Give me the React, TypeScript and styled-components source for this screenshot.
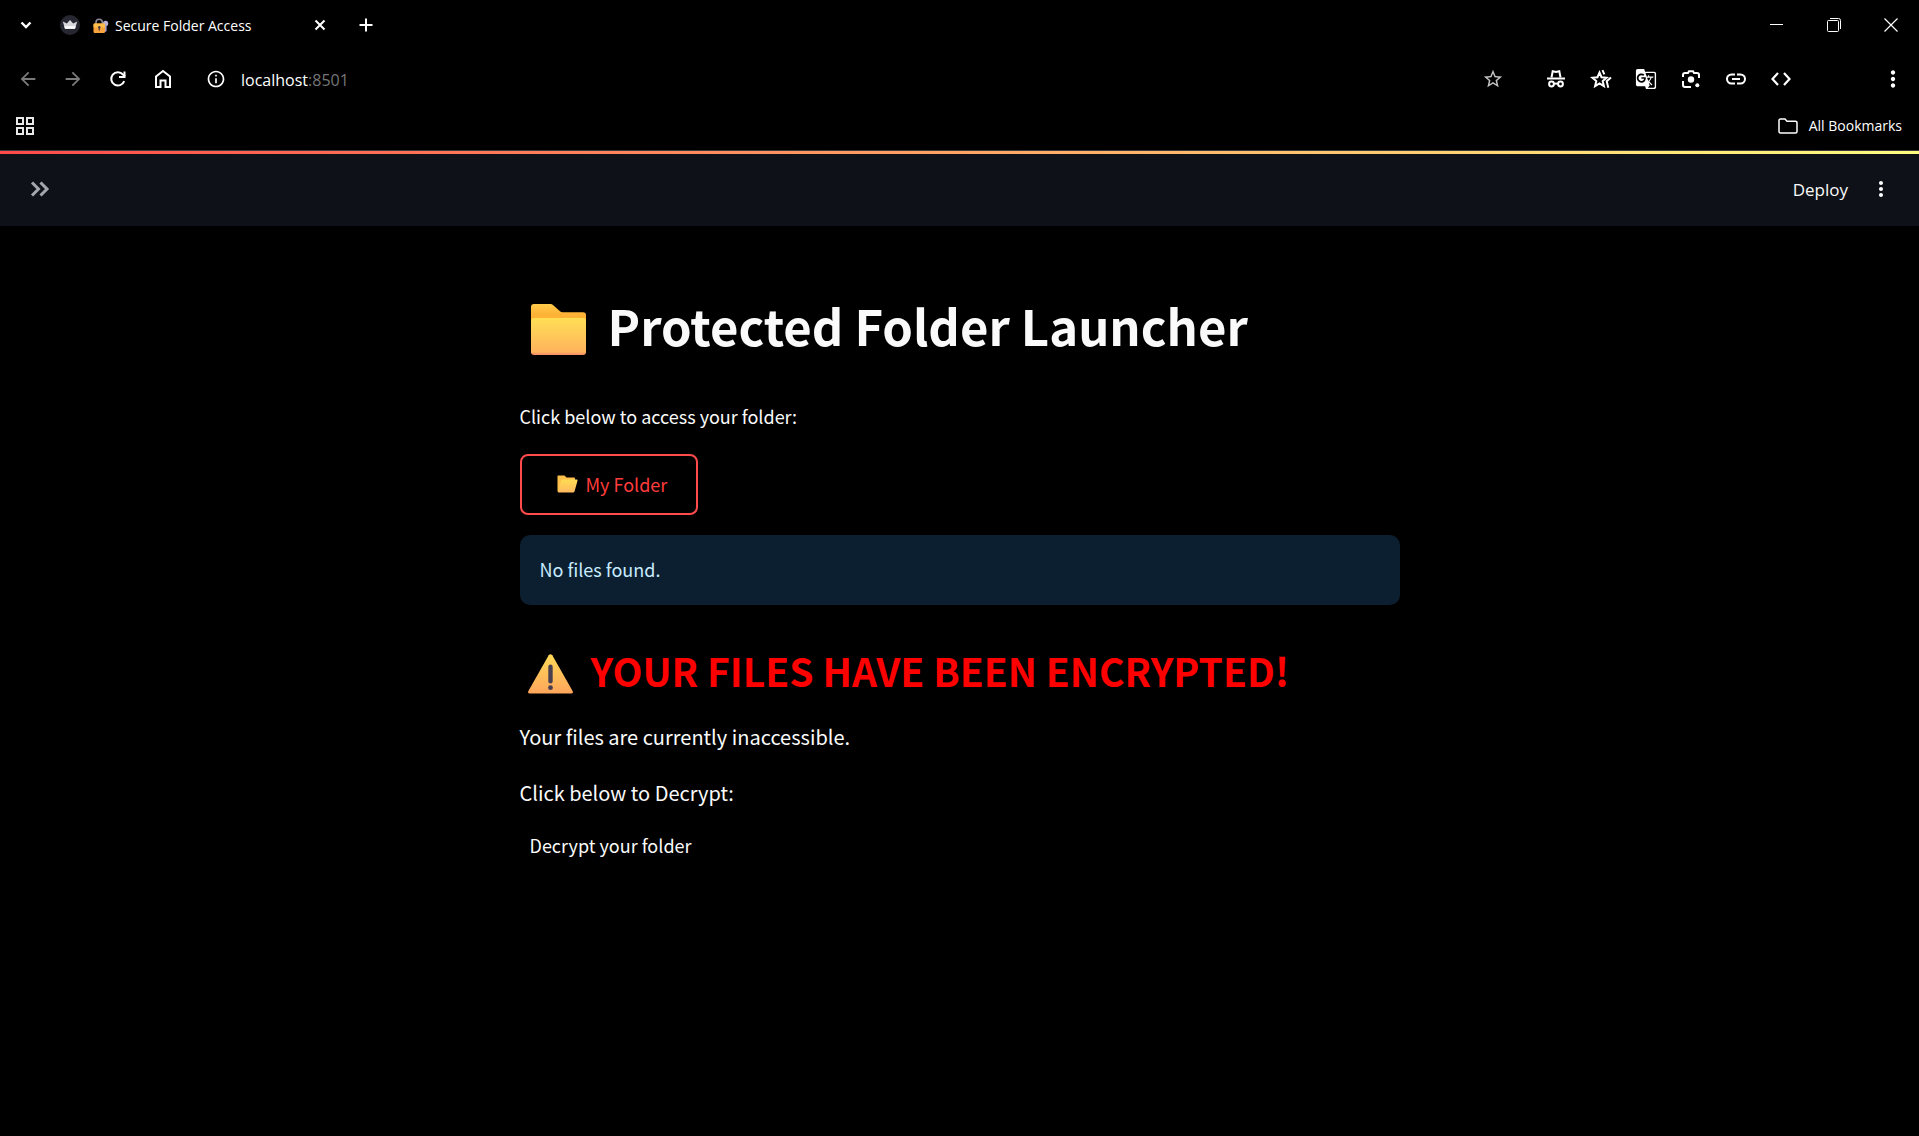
import React from "react";
import styled, { createGlobalStyle, css } from "styled-components";
import {
  MdArrowBack,
  MdArrowForward,
  MdGTranslate,
  MdInfoOutline,
  MdMoreVert,
  MdStarBorder,
} from "react-icons/md";

const uiFont = `"Segoe UI", "Open Sans", "Noto Sans", sans-serif`;
const appFont = `"Source Sans Pro", "Noto Sans CJK SC", "Noto Sans", sans-serif`;

const GlobalStyle = createGlobalStyle`
  *, *::before, *::after { box-sizing: border-box; }
  body { margin: 0; background: #000; color: #fafafa; font-family: ${appFont}; }
  h1, h2, p { margin: 0; }
  svg { display: block; flex: none; }
`;

const Page = styled.div`
  min-height: 100vh;
  display: flex;
  flex-direction: column;
  background: #000;
`;

/* Browser chrome */

const Chrome = styled.div`
  padding-bottom: 7px;
  border-bottom: 1px solid #3c3c3c;
  font-family: ${uiFont};
  color: #fff;
`;

const Row = styled.div<{ $height: number; $left?: number; $right?: number }>`
  display: flex;
  align-items: center;
  height: ${(p) => p.$height}px;
  padding: 0 ${(p) => p.$right ?? 0}px 0 ${(p) => p.$left ?? 0}px;
`;

const Spacer = styled.div`
  flex: 1;
`;

const IconButton = styled.button<{ $width?: number; $color?: string }>`
  display: flex;
  align-items: center;
  justify-content: center;
  flex: none;
  width: ${(p) => p.$width ?? 45}px;
  height: 36px;
  padding: 0;
  border: 0;
  background: none;
  color: ${(p) => p.$color ?? "#fff"};
`;

const Tab = styled.div`
  display: flex;
  align-items: center;
  width: 288px;
  padding-left: 12px;
`;

const TabTitle = styled.span`
  display: flex;
  align-items: center;
  gap: 6px;
  flex: 1;
  padding: 2px 0 0 13px;
  font-size: 14px;
  line-height: 20px;
  white-space: nowrap;
`;

const AddressBar = styled.form`
  display: flex;
  align-items: center;
  flex: 1;
  padding-left: 8px;
`;

const AddressField = styled.div`
  display: grid;
  flex: 1;
  padding: 2px 0 0 3px;
  font-size: 16px;
  line-height: 24px;
`;

const addressText = css`
  grid-area: 1 / 1;
  font: inherit;
  padding: 0;
  border: 0;
  background: none;
`;

const AddressInput = styled.input`
  ${addressText}
  width: 100%;
  color: transparent;
  caret-color: #fff;
  outline: none;
`;

const AddressDisplay = styled.span`
  ${addressText}
  pointer-events: none;
`;

const Port = styled.span`
  color: #757575;
`;

const BookmarksButton = styled.button`
  display: flex;
  align-items: center;
  gap: 11px;
  padding: 0;
  border: 0;
  background: none;
  color: #fff;
  font-family: inherit;
  font-size: 14px;
  line-height: 20px;
`;

/* App header */

const Header = styled.header`
  display: flex;
  flex-direction: column;
  height: 75px;
  background: #0e1117;
`;

const Decoration = styled.div`
  height: 3px;
  background: linear-gradient(90deg, #ff4b4b, #fffd80);
`;

const HeaderBar = styled.div`
  display: flex;
  align-items: center;
  flex: 1;
  padding: 0 16px 2px 17px;
`;

const DeployButton = styled.button`
  padding: 2px 10px 0;
  border: 0;
  background: none;
  color: #fafafa;
  font-family: ${uiFont};
  font-size: 17px;
  line-height: 24px;
`;

/* Main column */

const Main = styled.main`
  display: flex;
  flex-direction: column;
  align-items: flex-start;
  width: 100%;
  max-width: 880px;
  margin: 0 auto;
  padding: 66px 0 80px;
`;

const Title = styled.h1`
  display: flex;
  align-items: center;
  gap: 22px;
  padding-left: 11px;
  font-size: 49px;
  font-weight: 700;
  line-height: 66px;

  svg {
    margin-top: 8px;
  }
`;

const Warning = styled.h2`
  display: flex;
  align-items: center;
  gap: 18px;
  margin-top: 38px;
  padding-left: 8px;
  color: #ff0000;
  font-size: 39px;
  font-weight: 600;
  line-height: 54px;

  svg {
    margin-top: 8px;
  }
`;

const Text = styled.p<{ $size: number; $top: number }>`
  margin-top: ${(p) => p.$top}px;
  font-size: ${(p) => p.$size}px;
  line-height: 32px;
`;

const FolderButton = styled.button`
  display: flex;
  align-items: center;
  gap: 8px;
  height: 61px;
  margin-top: 22px;
  padding: 0 29px 2px 35px;
  border: 2px solid #ff4b4b;
  border-radius: 8px;
  background: #000;
  color: #ff3c3c;
  font-family: inherit;
  font-size: 18px;
  line-height: 32px;
`;

const Notice = styled.div`
  width: 100%;
  margin-top: 20px;
  padding: 18px 20px 20px;
  border-radius: 10px;
  background: #0c1f30;
  color: #c7ebff;
  font-size: 18px;
  line-height: 32px;
`;

const PlainButton = styled.button`
  margin-top: 20px;
  padding: 0 10px;
  border: 0;
  background: none;
  color: #fafafa;
  font-family: inherit;
  font-size: 18px;
  line-height: 32px;
`;

/* Icons */

type IconProps = {
  w: number;
  h?: number;
  box?: string;
  stroke?: number;
  children: React.ReactNode;
};

const Line = ({ w, h = w, box, stroke = 2, children }: IconProps) => (
  <svg
    width={w}
    height={h}
    viewBox={box ?? `0 0 ${w} ${h}`}
    fill="none"
    stroke="currentColor"
    strokeWidth={stroke}
    aria-hidden="true"
  >
    {children}
  </svg>
);

const Favicon = () => (
  <svg width="20" height="20" viewBox="0 0 20 20" aria-hidden="true">
    <circle cx="10" cy="10" r="10" fill="#262730" />
    <path d="M2.800 6.600 6.800 8.600 10 5l3.200 3.600 4-2-2.200 7.200H5z" fill="#d8d8dc" />
    <path d="M4.200 11.200h11.600l-.8 2.600H5z" fill="#fff" />
  </svg>
);

const LockKey = () => (
  <svg width="16" height="16" viewBox="0 0 16 16" aria-hidden="true">
    <path d="M3 7V4.400a3.200 3.200 0 0 1 6.400 0V7" fill="none" stroke="#8d8797" strokeWidth="1.600" />
    <circle cx="12.600" cy="5.400" r="2.600" fill="#bcb0d6" />
    <path d="M11.800 7h1.800v6l-.9 1-.9-1z" fill="#a79bc4" />
    <rect x="0.500" y="5.500" width="11.500" height="9.500" rx="1.200" fill="#f9a33e" />
    <rect x="0.500" y="5.500" width="11.500" height="4" rx="1.200" fill="#ffbe4a" />
    <circle cx="6.300" cy="9.200" r="1.200" fill="#4b3542" />
    <rect x="5.700" y="9.400" width="1.200" height="3.200" fill="#4b3542" />
  </svg>
);

const Reload = () => (
  <Line w={18}>
    <path d="M15.200 11.200A6.700 6.700 0 1 1 14 4.500L16 6.500" />
    <path d="M15.500 1.500v5.500h-5.500" />
  </Line>
);

const Home = () => (
  <Line w={18} h={20}>
    <path d="M2 7.500 9 2l7 5.500V18h-4.500v-6.500h-5V18H2z" />
  </Line>
);

const Incognito = () => (
  <Line w={20} h={20}>
    <path d="M5.500 8.500 6.700 2.200 10 3l3.300-.8 1.200 6.300" />
    <path d="M1 9.500h18" />
    <circle cx="5.500" cy="15" r="2.400" />
    <circle cx="14.500" cy="15" r="2.400" />
    <path d="M8 14.600h4" />
  </Line>
);

const DoubleStar = () => (
  <Line w={22} h={20}>
    <path d="m9.500 3.500 2 4.700 5.100.5-3.900 3.400 1.200 5-4.400-2.700-4.400 2.700 1.200-5L2.400 8.700l5.100-.5z" />
    <path d="M12.500 1.200 14.300 5.300M21 8.500l-4.300 3.700 1.600 6.600" />
  </Line>
);

const Lens = () => (
  <Line w={20} h={20}>
    <path d="M2 8V6a2 2 0 0 1 2-2h3l1-1.800h4L13 4h3a2 2 0 0 1 2 2v3M2 12v4a2 2 0 0 0 2 2h6" />
    <circle cx="10" cy="10.500" r="3.200" fill="currentColor" stroke="none" />
    <circle cx="16.300" cy="16.300" r="2" fill="currentColor" stroke="none" />
  </Line>
);

const LinkIcon = () => (
  <Line w={20} h={12}>
    <path d="M9 1.500H5.500a4.500 4.500 0 0 0 0 9H9M11 1.500h3.500a4.500 4.500 0 0 1 0 9H11M6 6h8" />
  </Line>
);

const Code = () => (
  <Line w={20} h={14} stroke={2.2}>
    <path d="M7 1 1.500 7 7 13M13 1l5.500 6L13 13" />
  </Line>
);

const Grid = () => (
  <Line w={18}>
    <path d="M1 1h6v6H1zM11 1h6v6h-6zM1 11h6v6H1zM11 11h6v6h-6z" />
  </Line>
);

const BookmarkFolder = () => (
  <Line w={20} h={16} stroke={1.5}>
    <path d="M1 2.500a1.500 1.500 0 0 1 1.500-1.500H7l2 2.200h8.500A1.500 1.500 0 0 1 19 4.700v8.800a1.500 1.500 0 0 1-1.500 1.500h-15A1.500 1.500 0 0 1 1 13.500z" />
  </Line>
);

const Folder = () => (
  <svg width="55" height="51" viewBox="0 0 55 51" aria-hidden="true">
    <defs>
      <linearGradient id="folderBack" x1="0" y1="0" x2="0" y2="1">
        <stop offset="0" stopColor="#ffcb4a" />
        <stop offset="0.350" stopColor="#ffb236" />
      </linearGradient>
      <linearGradient id="folderFront" x1="0" y1="0" x2="0" y2="1">
        <stop offset="0" stopColor="#ffdf55" />
        <stop offset="0.920" stopColor="#ffb35d" />
        <stop offset="1" stopColor="#f58a68" />
      </linearGradient>
    </defs>
    <path d="M0 3a3 3 0 0 1 3-3h16.500q1.500 0 2.500 1l7 6.300q1 .9 2.500.9H52a3 3 0 0 1 3 3V30H0z" fill="url(#folderBack)" />
    <path d="M0 17a3 3 0 0 1 3-3h49a3 3 0 0 1 3 3v31a3 3 0 0 1-3 3H3a3 3 0 0 1-3-3z" fill="url(#folderFront)" />
  </svg>
);

const OpenFolder = () => (
  <svg width="21" height="18" viewBox="0 0 21 18" aria-hidden="true">
    <defs>
      <linearGradient id="openFront" x1="0" y1="0" x2="0" y2="1">
        <stop offset="0" stopColor="#ffdc54" />
        <stop offset="1" stopColor="#ffb95f" />
      </linearGradient>
    </defs>
    <path d="M1 0.500h6.500l2 2H17a1 1 0 0 1 1 1V12L4 17H1.500A1 1 0 0 1 .5 16V1z" fill="#fdc04a" />
    <path d="M5.800 4.500h13.700a1 1 0 0 1 1 1.300L17.500 16.500a1.500 1.500 0 0 1-1.400 1H1.500Q.8 17.300 1.200 16L4 6q.5-1.500 1.800-1.500z" fill="url(#openFront)" />
  </svg>
);

const WarningSign = () => (
  <svg width="45" height="40" viewBox="0 0 45 40" aria-hidden="true">
    <defs>
      <linearGradient id="warnFill" x1="0" y1="0" x2="0" y2="1">
        <stop offset="0" stopColor="#ffd957" />
        <stop offset="1" stopColor="#ffa65c" />
      </linearGradient>
    </defs>
    <path d="M20.700 1.200q1.800-2 3.600 0L44.600 37q.9 2.500-1.600 2.500H2Q-.5 39.500.4 37z" fill="url(#warnFill)" />
    <rect x="20.300" y="10.500" width="4.400" height="19" rx="2.200" fill="#4a3f4e" />
    <circle cx="22.500" cy="33.700" r="2.400" fill="#4a3f4e" />
  </svg>
);

const DoubleChevron = () => (
  <Line w={20} h={16} stroke={3}>
    <path d="m2 1.500 6.500 6.500L2 14.500M10.500 1.500 17 8l-6.500 6.500" />
  </Line>
);

export default function App() {
  return (
    <Page>
      <GlobalStyle />
      <Chrome>
        <Row $height={50} $left={4}>
          <IconButton $width={44} aria-label="Search tabs">
            <Line w={12} h={8} stroke={2.4}><path d="m1.500 1.500 4.500 4.500 4.500-4.500" /></Line>
          </IconButton>
          <Tab>
            <Favicon />
            <TabTitle><LockKey />Secure Folder Access</TabTitle>
            <IconButton $width={32} aria-label="Close tab">
              <Line w={12}><path d="m1.500 1.500 9 9M10.500 1.500l-9 9" /></Line>
            </IconButton>
          </Tab>
          <IconButton $width={60} aria-label="New tab">
            <Line w={14}><path d="M7 0.500v13M0.500 7h13" /></Line>
          </IconButton>
          <Spacer />
          <IconButton $width={57} aria-label="Minimize">
            <Line w={13} h={3} stroke={1}><path d="M0 .5h13" /></Line>
          </IconButton>
          <IconButton $width={57} aria-label="Restore">
            <Line w={14} stroke={1}>
              <path d="M3 .5h8.500a2 2 0 0 1 2 2V11" />
              <rect x="0.500" y="2.500" width="11" height="11" rx="1" />
            </Line>
          </IconButton>
          <IconButton $width={57} aria-label="Close window">
            <Line w={14} stroke={1.2}><path d="m.5.5 13 13M13.500.5l-13 13" /></Line>
          </IconButton>
        </Row>
        <Row $height={58} $left={5} $right={4}>
          <IconButton $color="#7a7a7a" aria-label="Back"><MdArrowBack size={22} /></IconButton>
          <IconButton $color="#7a7a7a" aria-label="Forward"><MdArrowForward size={22} /></IconButton>
          <IconButton aria-label="Reload"><Reload /></IconButton>
          <IconButton aria-label="Home"><Home /></IconButton>
          <AddressBar>
            <IconButton aria-label="Site information" type="button"><MdInfoOutline size={20} /></IconButton>
            <AddressField>
              <AddressInput aria-label="Address" />
              <AddressDisplay>localhost<Port>:8501</Port></AddressDisplay>
            </AddressField>
            <IconButton $width={44} $color="#c4c4c4" aria-label="Bookmark this page" type="button"><MdStarBorder size={22} /></IconButton>
          </AddressBar>
          <Row $height={58} $left={18} $right={67}>
            <IconButton aria-label="Incognito"><Incognito /></IconButton>
            <IconButton aria-label="Favorites"><DoubleStar /></IconButton>
            <IconButton aria-label="Translate"><MdGTranslate size={22} /></IconButton>
            <IconButton aria-label="Search with Lens"><Lens /></IconButton>
            <IconButton aria-label="Copy link"><LinkIcon /></IconButton>
            <IconButton aria-label="Developer tools"><Code /></IconButton>
          </Row>
          <IconButton aria-label="Browser menu"><MdMoreVert size={26} /></IconButton>
        </Row>
        <Row $height={35} $left={2} $right={17}>
          <IconButton $color="#e8e8e8" aria-label="Tab groups"><Grid /></IconButton>
          <Spacer />
          <BookmarksButton><BookmarkFolder />All Bookmarks</BookmarksButton>
        </Row>
      </Chrome>
      <Header>
        <Decoration />
        <HeaderBar>
          <IconButton $color="#a3a8b0" aria-label="Open sidebar"><DoubleChevron /></IconButton>
          <Spacer />
          <DeployButton>Deploy</DeployButton>
          <IconButton aria-label="App menu"><MdMoreVert size={24} /></IconButton>
        </HeaderBar>
      </Header>
      <Main>
        <Title><Folder />Protected Folder Launcher</Title>
        <Text $size={18} $top={42}>Click below to access your folder:</Text>
        <FolderButton><OpenFolder />My Folder</FolderButton>
        <Notice>No files found.</Notice>
        <Warning><WarningSign />YOUR FILES HAVE BEEN ENCRYPTED!</Warning>
        <Text $size={20} $top={24}>Your files are currently inaccessible.</Text>
        <Text $size={20} $top={24}>Click below to Decrypt:</Text>
        <PlainButton>Decrypt your folder</PlainButton>
      </Main>
    </Page>
  );
}
